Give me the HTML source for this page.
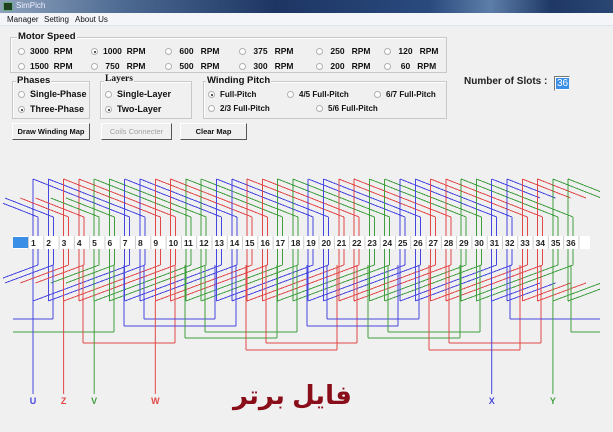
<!DOCTYPE html>
<html><head><meta charset="utf-8">
<style>
*{margin:0;padding:0;box-sizing:border-box}
body{width:613px;height:432px;overflow:hidden;background:#f0f0f0;font-family:"Liberation Sans",Arial,sans-serif;position:relative;color:#111}
.a{position:absolute;white-space:nowrap}
.tb{left:0;top:0;width:613px;height:13px;background:linear-gradient(90deg,#8fa3bd 0%,#4d6a92 20%,#1d3563 45%,#2a4a7e 70%,#5d7ea8 80%,#1f3866 90%,#2a4673 100%)}
.mb{left:0;top:13px;width:613px;height:13px;background:#f3f5f9;border-bottom:1px solid #dfe3ea;font-size:8px}
.g{position:absolute;border:1px solid #c8c8c8;box-shadow:inset 1px 1px 0 #fff}
.lb{position:absolute;font-weight:bold;font-size:9.5px;background:#f0f0f0;padding:0 1px}
.r{position:absolute;font-size:8.5px;font-weight:bold;white-space:nowrap}
.r i{display:inline-block;width:7px;height:7px;border:1px solid #b0b0b0;border-radius:50%;background:#fff;margin-right:5px;vertical-align:-1px;position:relative}
.r i.s:after{content:"";position:absolute;left:1.5px;top:1.5px;width:2px;height:2px;border-radius:50%;background:#222}
.btn{position:absolute;height:17px;background:#f0f0f0;border:1px solid;border-color:#fff #555 #555 #fff;font-size:7.5px;font-weight:bold;text-align:center;line-height:15px}
</style></head><body>
<div class="a tb"></div>
<div class="a" style="left:3px;top:2px;width:10px;height:9px;background:#204020;border:1px solid #6a8"></div>
<div class="a" style="left:16px;top:1px;font-size:8px;color:#eef">SimPich</div>
<div class="a mb"><span class="a" style="left:7px;top:2px">Manager</span><span class="a" style="left:44px;top:2px">Setting</span><span class="a" style="left:75px;top:2px">About Us</span></div>

<div class="g" style="left:10px;top:37px;width:437px;height:36px"></div>
<div class="lb" style="left:17px;top:31px">Motor Speed</div>
<div class="r" style="left:18px;top:46px"><i></i>3000&nbsp; RPM</div>
<div class="r" style="left:18px;top:61px"><i></i>1500&nbsp; RPM</div>
<div class="r" style="left:91px;top:46px"><i class="s"></i>1000&nbsp; RPM</div>
<div class="r" style="left:91px;top:61px"><i></i>&nbsp;750&nbsp;&nbsp; RPM</div>
<div class="r" style="left:165px;top:46px"><i></i>&nbsp;600&nbsp;&nbsp; RPM</div>
<div class="r" style="left:165px;top:61px"><i></i>&nbsp;500&nbsp;&nbsp; RPM</div>
<div class="r" style="left:239px;top:46px"><i></i>&nbsp;375&nbsp;&nbsp; RPM</div>
<div class="r" style="left:239px;top:61px"><i></i>&nbsp;300&nbsp;&nbsp; RPM</div>
<div class="r" style="left:316px;top:46px"><i></i>&nbsp;250&nbsp;&nbsp; RPM</div>
<div class="r" style="left:316px;top:61px"><i></i>&nbsp;200&nbsp;&nbsp; RPM</div>
<div class="r" style="left:384px;top:46px"><i></i>&nbsp;120&nbsp;&nbsp; RPM</div>
<div class="r" style="left:384px;top:61px"><i></i>&nbsp;&nbsp;60&nbsp;&nbsp; RPM</div>

<div class="g" style="left:12px;top:81px;width:78px;height:38px"></div>
<div class="lb" style="left:16px;top:75px">Phases</div>
<div class="r" style="left:18px;top:89px;font-size:9px"><i></i>Single-Phase</div>
<div class="r" style="left:18px;top:104px;font-size:9px"><i class="s"></i>Three-Phase</div>

<div class="g" style="left:100px;top:81px;width:92px;height:38px"></div>
<div class="lb" style="left:104px;top:74px;font-family:'Liberation Serif',serif">Layers</div>
<div class="r" style="left:105px;top:89px;font-size:9px"><i></i>Single-Layer</div>
<div class="r" style="left:105px;top:104px;font-size:9px"><i class="s"></i>Two-Layer</div>

<div class="g" style="left:203px;top:81px;width:244px;height:38px"></div>
<div class="lb" style="left:206px;top:75px">Winding Pitch</div>
<div class="r" style="left:208px;top:90px;font-size:8px"><i class="s"></i>Full-Pitch</div>
<div class="r" style="left:208px;top:104px;font-size:8px"><i></i>2/3 Full-Pitch</div>
<div class="r" style="left:287px;top:90px;font-size:8px"><i></i>4/5 Full-Pitch</div>
<div class="r" style="left:316px;top:104px;font-size:8px"><i></i>5/6 Full-Pitch</div>
<div class="r" style="left:374px;top:90px;font-size:8px"><i></i>6/7 Full-Pitch</div>

<div class="a" style="left:464px;top:76px;font-size:10px;font-weight:bold;color:#222">Number of Slots :</div>
<div class="a" style="left:554px;top:76px;width:16px;height:15px;background:#fff;border:1px solid;border-color:#777 #eee #eee #777"><span style="position:absolute;left:1px;top:1px;background:#3a8ee6;color:#fff;font-size:10px;line-height:11px;padding:0 1px">36</span></div>

<div class="btn" style="left:12px;top:123px;width:78px">Draw Winding Map</div>
<div class="btn" style="left:101px;top:123px;width:71px;color:#a0a0a0;font-weight:normal">Coils Connecter</div>
<div class="btn" style="left:180px;top:123px;width:67px">Clear Map</div>

<svg id="sv" class="a" style="left:0;top:0" width="613" height="432" xmlns="http://www.w3.org/2000/svg"></svg>

<div class="a" style="left:233px;top:380px;font-family:'Liberation Sans','DejaVu Sans',sans-serif;font-size:26px;font-weight:bold;color:#8a0d1a;direction:rtl">فایل برتر</div>

<script>
var sv=document.getElementById('sv'),h='';
function X(n){return 33+(n-1)*15.29}
var C=['#4646e0','#e24848','#3f9f3f'];
function col(n){n=((n-1)%36+36)%36+1;return C[Math.floor((n-1)/2)%3]}
function L(x1,y1,x2,y2,c){h+='<line x1="'+x1.toFixed(1)+'" y1="'+y1+'" x2="'+x2.toFixed(1)+'" y2="'+y2+'" stroke="'+c+'" stroke-width="1"/>'}
h+='<defs><clipPath id="cp"><rect x="3" y="0" width="597" height="432"/></clipPath></defs><g clip-path="url(#cp)" shape-rendering="crispEdges">';
for(var n=1;n<=36;n++){
 var x=X(n),c=col(n),c2=col(n-6),xt=X(n+6)+5;
 L(x,179,x,236,c);L(x+5,217,x+5,236,c2);
 L(x,249,x,301,c);L(x+5,249,x+5,265,c2);
 if(n<=30){L(x,179,xt,217,c);L(x,301,xt,265,c);}
 else{var mx=(x+xt)/2;L(x,179,mx,198,c);L(x,301,mx,283,c);}
 if(n<=6){var xs=X(n-6),xe=X(n)+5,mx2=(xs+xe)/2;L(mx2,198,xe,217,c2);L(mx2,283,xe,265,c2);}
}
var B=[[0,53,13,319],[2,114,13,332],[1,83,175,343],[0,124,236,326],[0,144,215,319],[2,185,277,338],[2,205,297,332],[1,246,337,350],[1,266,357,343],[0,307,398,326],[0,327,419,319],[2,368,460,338],[2,388,480,332],[1,429,520,350],[1,449,541,343],[0,510,601,319],[2,571,613,332]];
B.forEach(function(b){var c=C[b[0]];L(b[1],265,b[1],b[3],c);L(b[1],b[3],b[2],b[3],c);if(b[2]>20&&b[2]<600)L(b[2],265,b[2],b[3],c);});
h+='</g>';
var T=[[1,'U',0],[3,'Z',1],[5,'V',2],[9,'W',1],[31,'X',0],[35,'Y',2]];
T.forEach(function(t){var x=X(t[0]);L(x,301,x,394,C[t[2]]);h+='<text x="'+x+'" y="404" text-anchor="middle" font-size="9" font-weight="bold" font-family="Liberation Sans,sans-serif" fill="'+C[t[2]]+'">'+t[1]+'</text>';});
h+='<rect x="13" y="236" width="577" height="13" fill="#fff"/>';
h+='<rect x="13" y="237" width="15" height="11" fill="#3a8ee6"/>';
for(var n=1;n<=36;n++){var x=X(n);h+='<line x1="'+(x-4.5)+'" y1="236" x2="'+(x-4.5)+'" y2="249" stroke="#ccc"/><text x="'+(x-2)+'" y="246" font-size="8.5" font-weight="bold" font-family="Liberation Sans,sans-serif" fill="#222">'+n+'</text>';}
h+='<line x1="'+(X(37)-4.5)+'" y1="236" x2="'+(X(37)-4.5)+'" y2="249" stroke="#ccc"/>';
sv.innerHTML=h;
</script>
</body></html>
